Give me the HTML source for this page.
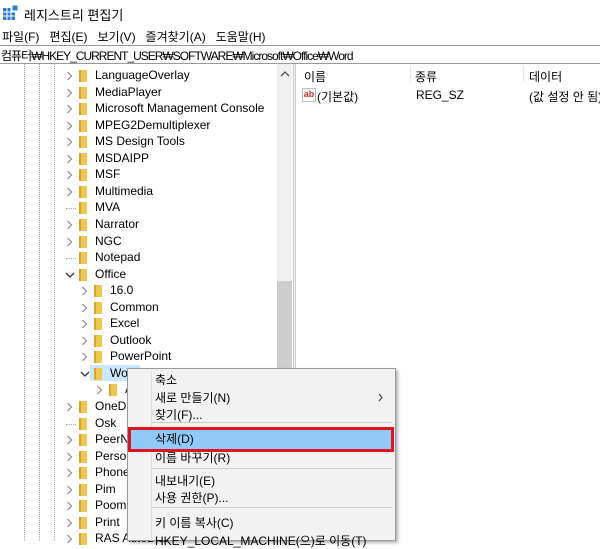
<!DOCTYPE html><html><head><meta charset="utf-8"><style>
*{margin:0;padding:0;box-sizing:border-box}
body{width:600px;height:541px;overflow:hidden;background:#fff;font-family:"Liberation Sans","Noto Sans CJK KR",sans-serif;font-size:12px;color:#000;position:relative}
.a{position:absolute;white-space:nowrap}
.f{position:absolute;width:8px;height:12px;background:#f0c650;border-left:2px solid #dca22e}
.c{position:absolute}
.dl{position:absolute;border-left:1px dotted #aaa;top:64px;height:477px}
</style></head><body>
<svg class="a" style="left:3px;top:5px" width="16" height="15"><rect x="0" y="3" width="12" height="12" fill="#2b7bd1"/><g stroke="#fff" stroke-width="1"><line x1="4" y1="3" x2="4" y2="15"/><line x1="8" y1="3" x2="8" y2="15"/><line x1="0" y1="7" x2="12" y2="7"/><line x1="0" y1="11" x2="12" y2="11"/></g><rect x="9" y="0" width="6" height="6" fill="#2b7bd1" stroke="#fff"/></svg>
<div class="a" style="left:24px;top:5px;font-size:13px">레지스트리 편집기</div>
<div class="a" style="left:2px;top:28px">파일(F) &nbsp; 편집(E) &nbsp; 보기(V) &nbsp; 즐겨찾기(A) &nbsp; 도움말(H)</div>
<div class="a" style="left:0;top:45px;width:600px;height:19px;border-top:1px solid #999;border-bottom:1px solid #999"></div>
<div class="a" style="left:1px;top:47px;font-size:12px;letter-spacing:-1px">컴퓨터₩HKEY_CURRENT_USER₩SOFTWARE₩Microsoft₩Office₩Word</div>
<div class="dl" style="left:24px"></div><div class="dl" style="left:39px"></div><div class="dl" style="left:54px"></div>
<div class="a" style="left:277px;top:64px;width:15px;height:477px;background:#f0f0f0"></div>
<div class="a" style="left:277px;top:281px;width:15px;height:260px;background:#cdcdcd"></div>
<svg class="a" style="left:280px;top:70px" width="10" height="8"><polyline points="1,6 5,2 9,6" fill="none" stroke="#555" stroke-width="1.3"/></svg>
<div class="a" style="left:293px;top:64px;width:3px;height:477px;background:#f0f0f0;border-left:1px solid #ccc;border-right:1px solid #ccc"></div>
<div class="a" style="left:90px;top:365px;width:50px;height:16px;background:#cce8ff"></div>
<div id="t"></div>
<div class="a" style="left:304px;top:68px">이름</div>
<div class="a" style="left:415px;top:68px">종류</div>
<div class="a" style="left:529px;top:68px">데이터</div>
<div class="a" style="left:410px;top:66px;height:16px;border-left:1px solid #e5e5e5"></div>
<div class="a" style="left:523px;top:66px;height:16px;border-left:1px solid #e5e5e5"></div>
<div class="a" style="left:302px;top:88px;width:14px;height:14px;border:1px solid #bbb;background:#fff;color:#c33;font-size:9px;font-weight:bold;line-height:10px;text-align:center">ab</div>
<div class="a" style="left:317px;top:88px">(기본값)</div>
<div class="a" style="left:416px;top:88px">REG_SZ</div>
<div class="a" style="left:529px;top:88px">(값 설정 안 됨)</div>
<div class="a" style="left:127px;top:368px;width:269px;height:173px;background:#f2f2f2;border:1px solid #999;box-shadow:2px 2px 3px rgba(0,0,0,.3)"></div>
<div class="a" style="left:151px;top:370px;width:1px;height:171px;background:#e0e0e0"></div>
<div class="a" style="left:131px;top:430px;width:261px;height:20px;background:#91c9f7"></div>
<div class="a" style="left:152px;top:422px;width:240px;height:1px;background:#ccc"></div>
<div class="a" style="left:152px;top:468px;width:240px;height:1px;background:#ccc"></div>
<div class="a" style="left:152px;top:507px;width:240px;height:1px;background:#ccc"></div>
<div class="a" style="left:155px;top:371px">축소</div>
<div class="a" style="left:155px;top:389px">새로 만들기(N)</div>
<svg class="a" style="left:378px;top:393px" width="6" height="9"><polyline points="1,1 4,4.5 1,8" fill="none" stroke="#444" stroke-width="1.2"/></svg>
<div class="a" style="left:155px;top:406px">찾기(F)...</div>
<div class="a" style="left:155px;top:430px">삭제(D)</div>
<div class="a" style="left:155px;top:449px">이름 바꾸기(R)</div>
<div class="a" style="left:155px;top:472px">내보내기(E)</div>
<div class="a" style="left:155px;top:489px">사용 권한(P)...</div>
<div class="a" style="left:155px;top:514px">키 이름 복사(C)</div>
<div class="a" style="left:155px;top:532px">HKEY_LOCAL_MACHINE(으)로 이동(T)</div>
<div class="a" style="left:128px;top:427px;width:266px;height:25px;border:3px solid #e0141e"></div>
<script>
var r=[["LanguageOverlay",1,1],["MediaPlayer",1,1],["Microsoft Management Console",1,1],["MPEG2Demultiplexer",1,1],["MS Design Tools",1,1],["MSDAIPP",1,1],["MSF",1,1],["Multimedia",1,1],["MVA",1,0],["Narrator",1,1],["NGC",1,1],["Notepad",1,0],["Office",1,2],["16.0",2,1],["Common",2,1],["Excel",2,1],["Outlook",2,1],["PowerPoint",2,1],["Word",2,2],["A",3,1],["OneDrive",1,1],["Osk",1,0],["PeerNet",1,1],["Personalization",1,1],["Phone",1,1],["Pim",1,1],["Poom",1,1],["Print",1,1],["RAS AutoDial",1,1]];
var h="";r.forEach(function(e,i){var y=68+i*16.55,x=[0,66,81,96][e[1]];
if(e[2]==1)h+='<svg class="c" style="left:'+x+'px;top:'+(y+3)+'px" width="7" height="10"><polyline points="1.5,1 5.5,5 1.5,9" fill="none" stroke="#888" stroke-width="1.2"/></svg>';
else if(e[2]==2)h+='<svg class="c" style="left:'+(x-1)+'px;top:'+(y+5)+'px" width="10" height="7"><polyline points="1,1 5,5 9,1" fill="none" stroke="#333" stroke-width="1.3"/></svg>';
else h+='<div class="a" style="left:'+x+'px;top:'+(y+8)+'px;width:10px;border-top:1px dotted #aaa"></div>';
h+='<div class="f" style="left:'+(x+13)+'px;top:'+(y+2)+'px"></div><div class="a" style="left:'+(x+29)+'px;top:'+y+'px">'+e[0]+'</div>';});
document.getElementById("t").innerHTML=h;
</script>
</body></html>
